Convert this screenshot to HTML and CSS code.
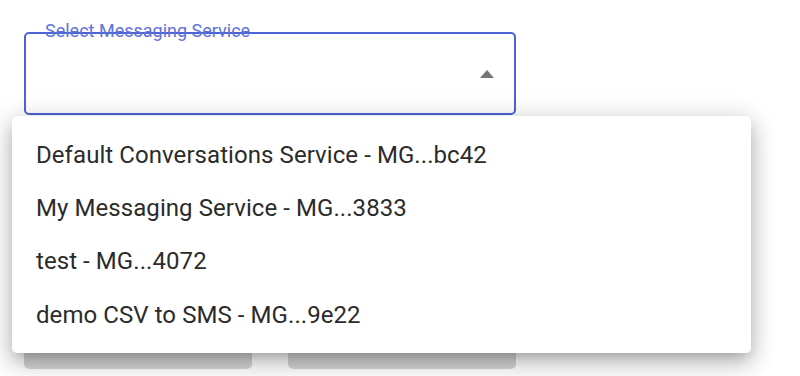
FILE: index.html
```html
<!DOCTYPE html>
<html lang="en">
<head>
<meta charset="utf-8">
<title>Select Messaging Service</title>
<link rel="stylesheet" href="styles.css">
</head>
<body>
<div class="page">
  <div class="field">
    <span class="field-label">Select Messaging Service</span>
    <div class="field-box">
      <svg class="arrow" width="14" height="8" viewBox="0 0 14 8"><polygon points="0,8 7,0 14,8" fill="#757575"/></svg>
    </div>
  </div>
  <div class="actions">
    <div class="btn"></div>
    <div class="btn"></div>
  </div>
</div>
<ul class="menu">
  <li class="menu-item">Default Conversations Service - MG...bc42</li>
  <li class="menu-item">My Messaging Service - MG...3833</li>
  <li class="menu-item">test - MG...4072</li>
  <li class="menu-item">demo CSV to SMS - MG...9e22</li>
</ul>
</body>
</html>
```
FILE: styles.css
```css
html, body {
  margin: 0;
  padding: 0;
  background: #ffffff;
  font-family: Roboto, "Liberation Sans", sans-serif;
  overflow: hidden;
}
.page {
  padding: 32px 0 0 24px;
}
.field {
  position: relative;
  width: 492px;
}
.field-label {
  position: absolute;
  left: 21px;
  top: -11px;
  font-size: 18px;
  line-height: 20px;
  color: #6073da;
  white-space: nowrap;
}
.field-box {
  box-sizing: border-box;
  height: 83px;
  border: 2px solid #4b63d6;
  border-radius: 5px;
  display: flex;
  align-items: center;
  justify-content: flex-end;
  padding-right: 20px;
}
.arrow {
  display: block;
}
.actions {
  display: flex;
  gap: 36px;
  margin-top: 206px;
}
.btn {
  width: 228px;
  height: 48px;
  background: #d6d6d6;
  border-radius: 5px;
}
.menu {
  position: absolute;
  left: 12px;
  top: 116px;
  width: 739px;
  margin: 0;
  padding: 12px 0;
  list-style: none;
  background: #ffffff;
  border-radius: 5px;
  box-shadow: 0 7px 12px -5px rgba(0,0,0,0.22), 0 11px 22px 2px rgba(0,0,0,0.14), 0 4px 27px 4px rgba(0,0,0,0.12);
}
.menu-item {
  box-sizing: border-box;
  height: 53.33px;
  padding: 0 24px;
  display: flex;
  align-items: center;
  font-size: 24px;
  line-height: 32px;
  letter-spacing: 0.07px;
  color: #2b2b2b;
  white-space: nowrap;
}
```
